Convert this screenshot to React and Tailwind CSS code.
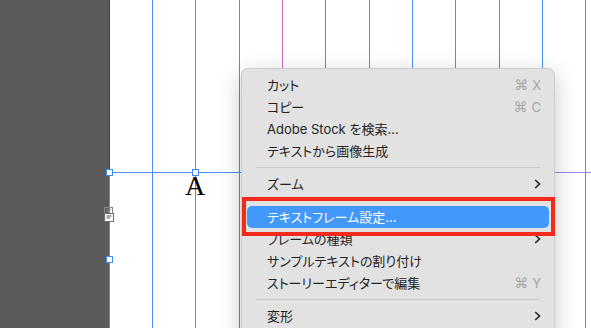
import React from 'react';

// column guides on the page, x = 110 + offsets
const columns = ['blue', 'blue', 'blue', 'pink', 'blue', 'blue', 'blue', 'blue', 'blue', 'blue', 'blue'];

const Chevron = () => (
  <svg width="7" height="10" viewBox="0 0 7 10" className="block">
    <polyline points="1.2,1 5.5,5 1.2,9" fill="none" stroke="#2a2a2a" strokeWidth="1.7" />
  </svg>
);

const Shortcut = ({ k }) => (
  <span className="flex items-center gap-[4px] text-[#a6a6a6]">
    <span className="text-[14px] [font-family:'DejaVu_Sans',sans-serif]">⌘</span>
    <span>{k}</span>
  </span>
);

const Row = ({ label, shortcut, sub, active }) => (
  <div
    className={`h-[22px] rounded-[5px] pl-[20px] pr-[8px] flex items-center justify-between ${
      active ? 'bg-[#4398fb] text-white' : 'text-[#242424]'
    }`}
  >
    <span className="whitespace-nowrap">{label}</span>
    {shortcut && <Shortcut k={shortcut} />}
    {sub && <Chevron />}
  </div>
);

const Sep = () => <div className="h-px bg-[#c9c9c9] mx-[9px] my-[5px]" />;

const Handle = ({ className }) => (
  <div className={`absolute w-[7px] h-[7px] bg-white border border-[#3d8af7] ${className}`} />
);

export default function App() {
  return (
    <div className="relative w-[591px] h-[328px] overflow-hidden flex bg-white">
      {/* pasteboard */}
      <div className="w-[110px] shrink-0 h-full bg-[#5a5a5a] border-r border-[#404040]" />

      {/* page with column guides */}
      <div className="flex-1 h-full flex">
        <div className="w-[42px] shrink-0" />
        {columns.map((c, i) => (
          <div
            key={i}
            className={`w-[43.35px] shrink-0 h-full border-l ${c === 'pink' ? 'border-[#d36ac0]' : 'border-[#4a90f5]'}`}
          />
        ))}
      </div>

      {/* text frame edges */}
      <div className="absolute left-[109px] top-[172px] w-px h-[156px] bg-[#4a90f5]" />
      <div className="absolute left-[109px] top-[172px] w-[140px] h-px bg-[#4a90f5]" />
      <div className="absolute left-[550px] top-[172px] w-[41px] h-px bg-[#8e8ef5]" />

      <Handle className="left-[106px] top-[169px]" />
      <Handle className="left-[192px] top-[169px]" />
      <Handle className="left-[106px] top-[256px]" />

      <div className="absolute left-[185px] top-[170px] text-[28px] leading-[32px] text-black [font-family:'Liberation_Serif',serif]">
        A
      </div>

      {/* text frame port icon */}
      <svg className="absolute left-[103px] top-[206px]" width="12" height="17" viewBox="0 0 12 17">
        <rect x="1.5" y="1.5" width="8" height="7" fill="none" stroke="#8a8a8a" />
        <line x1="3" y1="3.5" x2="8" y2="3.5" stroke="#8a8a8a" />
        <line x1="3" y1="5.5" x2="7" y2="5.5" stroke="#8a8a8a" />
        <rect x="1.5" y="7.5" width="9" height="8" fill="#fff" stroke="#6e6e6e" />
        <line x1="3.5" y1="10" x2="8.5" y2="10" stroke="#555" />
        <line x1="3.5" y1="12" x2="7" y2="12" stroke="#555" />
      </svg>

      {/* context menu */}
      <div className="absolute left-[241px] top-[68px] w-[314px] h-[280px] rounded-[7px] bg-[#e2e2e2] border border-[#cbcbcb] shadow-[0_6px_22px_rgba(0,0,0,0.22)] pt-[5px] px-[5px] text-[13px] leading-none [font-family:'Inter','Noto_Sans_CJK_JP','DejaVu_Sans',sans-serif] [font-feature-settings:'palt']">
        <Row label="カット" shortcut="X" />
        <Row label="コピー" shortcut="C" />
        <Row label="Adobe Stock を検索..." />
        <Row label="テキストから画像生成" />
        <Sep />
        <Row label="ズーム" sub />
        <Sep />
        <Row label="テキストフレーム設定..." active />
        <Row label="フレームの種類" sub />
        <Row label="サンプルテキストの割り付け" />
        <Row label="ストーリーエディターで編集" shortcut="Y" />
        <Sep />
        <Row label="変形" sub />
      </div>

      {/* annotation */}
      <div className="absolute left-[242px] top-[197px] w-[313px] h-[39px] border-[4px] border-[#f42b1c]" />
    </div>
  );
}
